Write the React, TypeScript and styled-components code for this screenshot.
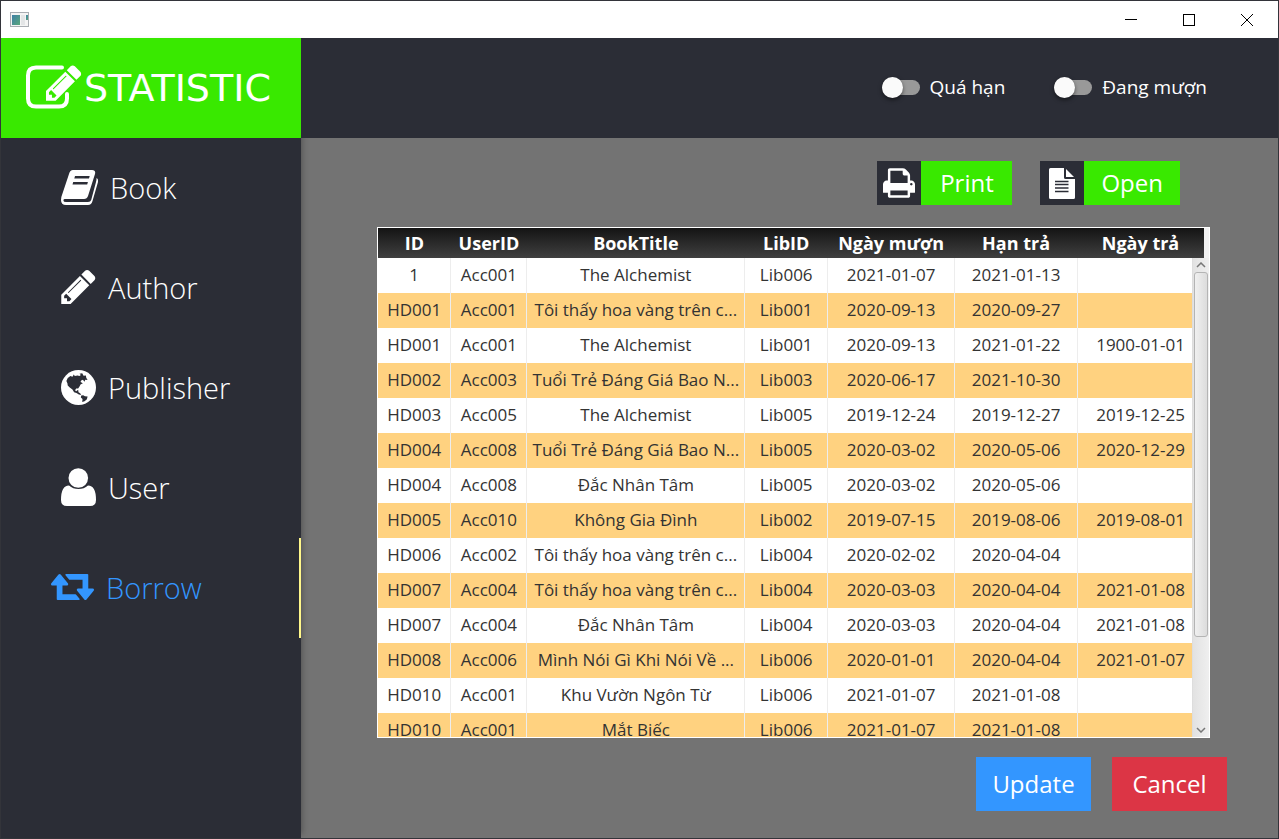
import React from "react";
import styled, { createGlobalStyle, css } from "styled-components";

const color = {
  frame: "#33343a",
  dark: "#2b2d36",
  green: "#39e900",
  blue: "#3396ff",
  red: "#dc3545",
  body: "#737373",
  row: "#ffd280",
};

const GlobalStyle = createGlobalStyle`
  *, *::before, *::after { box-sizing: border-box; }
  html, body { margin: 0; padding: 0; }
  body { font-family: "Open Sans", "Noto Sans", sans-serif; }
  button { font: inherit; border: 0; padding: 0; margin: 0; cursor: pointer; }
`;

const Window = styled.div`
  display: flex;
  flex-direction: column;
  height: 100vh;
  border: 1px solid ${color.frame};
  background: ${color.body};
`;

const TitleBar = styled.header`
  display: flex;
  align-items: center;
  justify-content: space-between;
  flex: 0 0 37px;
  padding: 0 2px 0 9px;
  background: #fff;
`;

const WindowControls = styled.div`
  display: flex;
  align-self: stretch;
`;

const WindowButton = styled.button`
  display: flex;
  align-items: center;
  justify-content: center;
  width: 58px;
  background: transparent;
`;

const Shell = styled.div`
  display: grid;
  grid-template-columns: 300px 1fr;
  flex: 1;
  min-height: 0;
`;

const Sidebar = styled.aside`
  display: flex;
  flex-direction: column;
  background: ${color.dark};
  box-shadow: 5px 0 6px -4px rgba(0, 0, 0, 0.3);
`;

const Brand = styled.h1`
  display: flex;
  align-items: center;
  gap: 2px;
  height: 100px;
  margin: 0;
  padding-left: 24px;
  background: ${color.green};
  color: #fff;
  font: 400 38px "DejaVu Sans", sans-serif;
`;

const Nav = styled.nav`
  display: flex;
  flex-direction: column;
`;

const NavItem = styled.button<{ $active?: boolean; $wide?: boolean }>`
  display: flex;
  align-items: center;
  gap: 12px;
  height: 100px;
  padding-left: ${(p) => (p.$wide ? 50 : 60)}px;
  padding-bottom: 2px;
  background: transparent;
  border-right: 2px solid ${(p) => (p.$active ? "#fff78a" : "transparent")};
  color: ${(p) => (p.$active ? color.blue : "#fff")};
  font-size: 29px;
  font-weight: 300;
`;

const Main = styled.main`
  display: flex;
  flex-direction: column;
  min-width: 0;
  min-height: 0;
`;

const FilterBar = styled.div`
  display: flex;
  align-items: center;
  justify-content: flex-end;
  gap: 49px;
  flex: 0 0 100px;
  padding: 0 71px 2px 0;
  background: ${color.dark};
`;

const FilterLabel = styled.label`
  display: flex;
  align-items: center;
  gap: 10px;
  color: #fff;
  font-size: 19px;
`;

const Toggle = styled.input`
  appearance: none;
  display: flex;
  align-items: center;
  width: 38px;
  height: 15px;
  margin: 0;
  border-radius: 8px;
  background: #999;

  &::before {
    content: "";
    width: 21px;
    height: 21px;
    flex: none;
    border-radius: 50%;
    background: #fafafa;
    box-shadow: 0 2px 4px rgba(0, 0, 0, 0.5);
  }

  &:checked {
    justify-content: flex-end;
    background: ${color.green};
  }
`;

const Content = styled.section`
  display: flex;
  flex-direction: column;
  flex: 1;
  min-height: 0;
  padding: 23px 51px 27px 76px;
`;

const Tools = styled.div`
  display: flex;
  justify-content: flex-end;
  gap: 28px;
  padding-right: 47px;
`;

const ToolButton = styled.button`
  display: flex;
  height: 44px;
  background: ${color.green};
  color: #fff;
  font-size: 24px;
  line-height: 44px;
`;

const ToolIcon = styled.span`
  display: flex;
  align-items: center;
  justify-content: center;
  width: 44px;
  height: 44px;
  background: ${color.dark};
`;

const ToolText = styled.span`
  min-width: 91px;
  padding: 0 17px;
  text-align: center;
`;

const TableFrame = styled.div`
  position: relative;
  flex: 1;
  min-height: 0;
  margin: 22px 17px 19px 0;
  overflow: hidden;
  border: 1px solid #fff;
  background: #f2f2f2;
`;

const Table = styled.table`
  width: calc(100% - 5px);
  table-layout: fixed;
  border-collapse: collapse;
`;

const cell = css`
  padding: 0 4px;
  text-align: center;
  white-space: nowrap;
  overflow: hidden;
`;

const HeadRow = styled.tr`
  height: 30px;
  background: linear-gradient(#141414, #404040);
`;

const HeadCell = styled.th`
  ${cell}
  color: #fff;
  font-size: 18px;
  line-height: 30px;
  font-weight: 700;
`;

const BodyRow = styled.tr`
  height: 35px;
  background: #fff;

  &:nth-child(even) {
    background: ${color.row};
  }
`;

const BodyCell = styled.td`
  ${cell}
  padding-bottom: 2px;
  border-right: 1px solid #ededed;
  color: #333;
  font-size: 17px;
  line-height: 32px;
`;

const ScrollBar = styled.div`
  position: absolute;
  top: 30px;
  right: 0;
  bottom: 0;
  display: flex;
  flex-direction: column;
  align-items: center;
  width: 17px;
  border-left: 1px solid #ddd;
  background: linear-gradient(90deg, #e2e2e2, #efefef);
`;

const ScrollArrow = styled.button`
  display: flex;
  align-items: center;
  justify-content: center;
  width: 16px;
  height: 14px;
  background: transparent;
`;

const ScrollTrack = styled.div`
  flex: 1;
  align-self: stretch;
  padding: 0 1px;
`;

const ScrollThumb = styled.div`
  height: 81%;
  border: 1px solid #b4b4b4;
  border-radius: 3px;
  background: linear-gradient(90deg, #f0f0f0, #dcdcdc);
`;

const Actions = styled.div`
  display: flex;
  justify-content: flex-end;
  gap: 21px;
`;

const ActionButton = styled.button<{ $fill: string }>`
  width: 115px;
  height: 54px;
  padding-bottom: 2px;
  background: ${(p) => p.$fill};
  color: #fff;
  font-size: 24px;
`;

const PENCIL =
  "M363 1408l91-91-235-235-91 91v107h128v128h107zm523-928q0-22-22-22-10 0-17 7l-542 542q-7 7-7 17 0 22 22 22 10 0 17-7l542-542q7-7 7-17zm-54-192l416 416-832 832h-416v-416zm683 96q0 53-37 90l-166 166-416-416 166-165q36-38 90-38 53 0 91 38l235 234q37 39 37 91z";

const AppIcon = () => (
  <svg width="20" height="16" viewBox="0 0 20 16" aria-hidden="true">
    <defs>
      <linearGradient id="appfill" x1="0" y1="0" x2="1" y2="1">
        <stop offset="0" stopColor="#3f7fa6" />
        <stop offset="1" stopColor="#5aa87c" />
      </linearGradient>
    </defs>
    <rect x="0.5" y="0.5" width="18" height="14" fill="#f4f4f4" stroke="#a9adb2" />
    <rect x="2" y="3" width="8" height="10" fill="url(#appfill)" />
    <rect x="11" y="3" width="4" height="10" fill="#e3e5e6" />
    <rect x="16" y="3" width="2" height="5" fill="url(#appfill)" />
  </svg>
);

const BrandIcon = () => (
  <svg width="57" height="46" viewBox="0 0 57 46" aria-hidden="true">
    <path
      d="M37 2.500H11Q3 2.500 3 10.500V33.500Q3 41.500 11 41.500H34Q42 41.500 42 33.500V29"
      fill="none"
      stroke="#fff"
      strokeWidth="4"
      strokeLinecap="round"
    />
    <path d={PENCIL} fill="#fff" transform="translate(21 0) scale(0.0232)" />
  </svg>
);

const BookIcon = () => (
  <svg width="37" height="35" viewBox="0 0 37 35" aria-hidden="true">
    <path
      fill="currentColor"
      fillRule="evenodd"
      d="M12 0H31Q35 0 34 4L27 26Q26 29 23 29H4Q2.400 29 2.400 30.400Q2.500 32 5 32H27Q29.500 32 30.200 30L35 12Q35.600 10 35.500 8Q37.600 9 37 12L31.500 31Q30.500 35 27 35H5Q0 35 0 30Q0 27 1 25L8 4Q9 0 12 0ZM14 6L13.300 8.500H28L28.700 6ZM12.200 12L11.500 14.500H26.200L26.900 12Z"
    />
  </svg>
);

const AuthorIcon = () => (
  <svg width="35" height="34" viewBox="0 21 1536 1515" aria-hidden="true">
    <path fill="currentColor" d={PENCIL} />
  </svg>
);

const GlobeIcon = () => (
  <svg width="35" height="35" viewBox="27 19 104 104" aria-hidden="true">
    <circle cx="79" cy="71" r="52" fill="currentColor" />
    <path
      fill={color.dark}
      d="M43 52L47 43L55 37L61 39L65 32L68 37L76 35L82 37L86 34L82 30L90 29L94 36L101 35L102 42L106 49L99 48L97 54L92 48L87 50L85 55L92 58L85 62L82 68L78 74L72 74L69 79L72 82L78 78L79 85L84 88L87 93L80 92L73 87L66 85L61 77L53 71L47 65L46 58Z"
    />
    <path fill={color.dark} d="M87 95L93 94L98 97L106 98L104 106L97 112L90 114L91 105L86 101Z" />
  </svg>
);

const UserIcon = () => (
  <svg width="35" height="38" viewBox="0 0 35 38" aria-hidden="true">
    <circle cx="17.300" cy="10" r="9.800" fill="currentColor" />
    <path
      fill="currentColor"
      d="M8 17.500Q12 21 17.500 21T27 17.500Q35 17.500 35 32Q35 38 29 38H6Q0 38 0 32Q0 17.500 8 17.500Z"
    />
  </svg>
);

const BorrowIcon = () => (
  <svg width="43" height="26" viewBox="0 128 1920 1152" aria-hidden="true">
    <path
      fill="currentColor"
      d="M1280 1248q0 13-9.500 22.500t-22.500 9.500h-960q-8 0-13.500-2t-9-7-5.500-8-3-11.500-1-11.500v-600h-192q-26 0-45-19t-19-45q0-24 15-41l320-384q19-22 49-22t49 22l320 384q15 17 15 41 0 26-19 45t-45 19h-192v384h576q16 0 25 11l160 192q7 10 7 21zm640-416q0 24-15 41l-320 384q-20 23-49 23t-49-23l-320-384q-15-17-15-41 0-26 19-45t45-19h192v-384h-576q-16 0-25-12l-160-192q-7-9-7-20 0-13 9.500-22.500t22.500-9.500h960q8 0 13.500 2t9 7 5.500 8 3 11.500 1 11.500v600h192q26 0 45 19t19 45z"
    />
  </svg>
);

const PrintIcon = () => (
  <svg width="32" height="30" viewBox="0 0 1664 1536" aria-hidden="true">
    <path
      fill="#fff"
      d="M384 1408h896v-256h-896v256zm0-640h896v-384h-160q-40 0-68-28t-28-68v-160h-640v640zm1152 64q0-26-19-45t-45-19-45 19-19 45 19 45 45 19 45-19 19-45zm128 0v416q0 13-9.500 22.500t-22.500 9.500h-224v160q0 40-28 68t-68 28h-960q-40 0-68-28t-28-68v-160h-224q-13 0-22.500-9.500t-9.500-22.500v-416q0-79 56.500-135.500t135.500-56.500h64v-544q0-40 28-68t68-28h672q40 0 88 20t76 48l152 152q28 28 48 76t20 88v256h64q79 0 135.500 56.500t56.500 135.500z"
    />
  </svg>
);

const FileIcon = () => (
  <svg width="26" height="31" viewBox="0 0 26 31" aria-hidden="true">
    <path
      fill="#fff"
      d="M1.500 0H15V9.500Q15 11 16.500 11H26V29.500Q26 31 24.500 31H1.500Q0 31 0 29.500V1.500Q0 0 1.500 0ZM17 1L25 9H17Z"
    />
    <path stroke={color.dark} strokeWidth="1.400" d="M6 13.500H19.500M6 16.500H19.500M6 20H19.500M6 23.500H19.500" />
  </svg>
);

const navItems = [
  { label: "Book", Icon: BookIcon },
  { label: "Author", Icon: AuthorIcon },
  { label: "Publisher", Icon: GlobeIcon },
  { label: "User", Icon: UserIcon },
  { label: "Borrow", Icon: BorrowIcon, active: true, wide: true },
];

const columns = [
  { title: "ID", width: 73 },
  { title: "UserID", width: 76 },
  { title: "BookTitle", width: 218 },
  { title: "LibID", width: 83 },
  { title: "Ngày mượn", width: 127 },
  { title: "Hạn trả", width: 123 },
  { title: "Ngày trả", width: 126 },
];

const rows = [
  ["1", "Acc001", "The Alchemist", "Lib006", "2021-01-07", "2021-01-13", ""],
  ["HD001", "Acc001", "Tôi thấy hoa vàng trên c...", "Lib001", "2020-09-13", "2020-09-27", ""],
  ["HD001", "Acc001", "The Alchemist", "Lib001", "2020-09-13", "2021-01-22", "1900-01-01"],
  ["HD002", "Acc003", "Tuổi Trẻ Đáng Giá Bao N...", "Lib003", "2020-06-17", "2021-10-30", ""],
  ["HD003", "Acc005", "The Alchemist", "Lib005", "2019-12-24", "2019-12-27", "2019-12-25"],
  ["HD004", "Acc008", "Tuổi Trẻ Đáng Giá Bao N...", "Lib005", "2020-03-02", "2020-05-06", "2020-12-29"],
  ["HD004", "Acc008", "Đắc Nhân Tâm", "Lib005", "2020-03-02", "2020-05-06", ""],
  ["HD005", "Acc010", "Không Gia Đình", "Lib002", "2019-07-15", "2019-08-06", "2019-08-01"],
  ["HD006", "Acc002", "Tôi thấy hoa vàng trên c...", "Lib004", "2020-02-02", "2020-04-04", ""],
  ["HD007", "Acc004", "Tôi thấy hoa vàng trên c...", "Lib004", "2020-03-03", "2020-04-04", "2021-01-08"],
  ["HD007", "Acc004", "Đắc Nhân Tâm", "Lib004", "2020-03-03", "2020-04-04", "2021-01-08"],
  ["HD008", "Acc006", "Mình Nói Gì Khi Nói Về ...", "Lib006", "2020-01-01", "2020-04-04", "2021-01-07"],
  ["HD010", "Acc001", "Khu Vườn Ngôn Từ", "Lib006", "2021-01-07", "2021-01-08", ""],
  ["HD010", "Acc001", "Mắt Biếc", "Lib006", "2021-01-07", "2021-01-08", ""],
];

export default function App() {
  return (
    <>
      <GlobalStyle />
      <Window>
        <TitleBar>
          <AppIcon />
          <WindowControls>
            <WindowButton aria-label="Minimize">
              <svg width="12" height="12" shapeRendering="crispEdges">
                <path d="M0 5.500H12" stroke="#000" />
              </svg>
            </WindowButton>
            <WindowButton aria-label="Maximize">
              <svg width="12" height="12" shapeRendering="crispEdges">
                <rect x="0.5" y="0.5" width="11" height="11" fill="none" stroke="#000" />
              </svg>
            </WindowButton>
            <WindowButton aria-label="Close">
              <svg width="12" height="12">
                <path d="M0 0L12 12M12 0L0 12" stroke="#000" />
              </svg>
            </WindowButton>
          </WindowControls>
        </TitleBar>
        <Shell>
          <Sidebar>
            <Brand>
              <BrandIcon />
              STATISTIC
            </Brand>
            <Nav>
              {navItems.map(({ label, Icon, active, wide }) => (
                <NavItem key={label} $active={active} $wide={wide} aria-current={active ? "page" : undefined}>
                  <Icon />
                  {label}
                </NavItem>
              ))}
            </Nav>
          </Sidebar>
          <Main>
            <FilterBar>
              <FilterLabel>
                <Toggle type="checkbox" />
                Quá hạn
              </FilterLabel>
              <FilterLabel>
                <Toggle type="checkbox" />
                Đang mượn
              </FilterLabel>
            </FilterBar>
            <Content>
              <Tools>
                <ToolButton>
                  <ToolIcon>
                    <PrintIcon />
                  </ToolIcon>
                  <ToolText>Print</ToolText>
                </ToolButton>
                <ToolButton>
                  <ToolIcon>
                    <FileIcon />
                  </ToolIcon>
                  <ToolText>Open</ToolText>
                </ToolButton>
              </Tools>
              <TableFrame>
                <Table>
                  <colgroup>
                    {columns.map((c) => (
                      <col key={c.title} style={{ width: `${(c.width / 826) * 100}%` }} />
                    ))}
                  </colgroup>
                  <thead>
                    <HeadRow>
                      {columns.map((c) => (
                        <HeadCell key={c.title} scope="col">
                          {c.title}
                        </HeadCell>
                      ))}
                    </HeadRow>
                  </thead>
                  <tbody>
                    {rows.map((row, i) => (
                      <BodyRow key={i}>
                        {row.map((value, j) => (
                          <BodyCell key={j}>{value}</BodyCell>
                        ))}
                      </BodyRow>
                    ))}
                  </tbody>
                </Table>
                <ScrollBar>
                  <ScrollArrow aria-label="Scroll up">
                    <svg width="10" height="6">
                      <path d="M1 5L5 1L9 5" fill="none" stroke="#777" strokeWidth="1.500" />
                    </svg>
                  </ScrollArrow>
                  <ScrollTrack>
                    <ScrollThumb />
                  </ScrollTrack>
                  <ScrollArrow aria-label="Scroll down">
                    <svg width="10" height="6">
                      <path d="M1 1L5 5L9 1" fill="none" stroke="#777" strokeWidth="1.500" />
                    </svg>
                  </ScrollArrow>
                </ScrollBar>
              </TableFrame>
              <Actions>
                <ActionButton $fill={color.blue}>Update</ActionButton>
                <ActionButton $fill={color.red}>Cancel</ActionButton>
              </Actions>
            </Content>
          </Main>
        </Shell>
      </Window>
    </>
  );
}
